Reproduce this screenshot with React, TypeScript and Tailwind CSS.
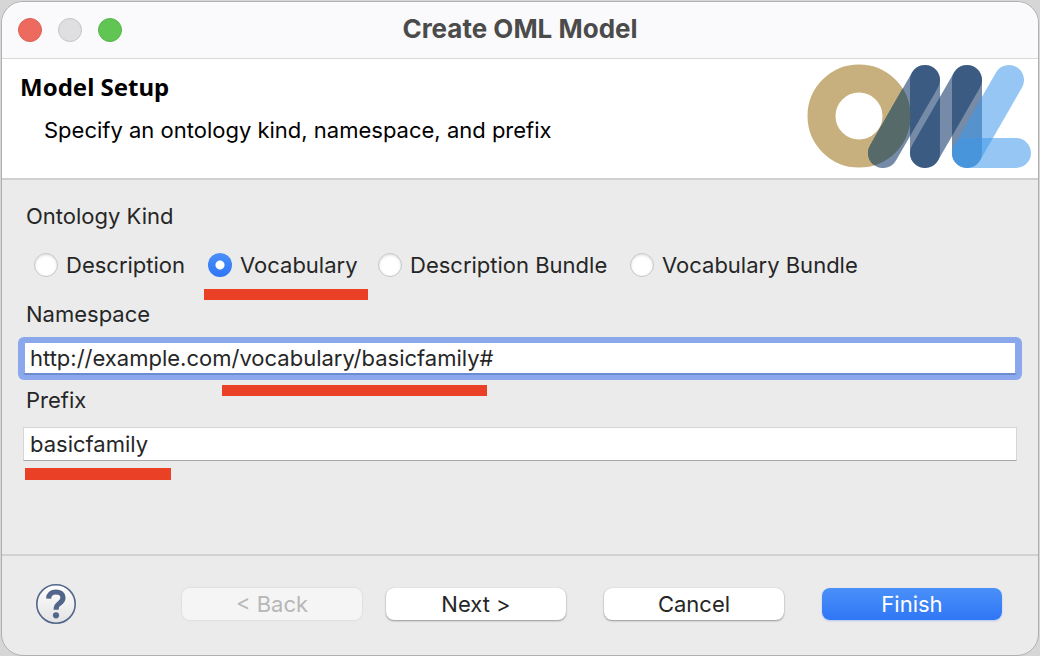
import { useState } from "react";

const kinds = ["Description", "Vocabulary", "Description Bundle", "Vocabulary Bundle"];

function OmlLogo() {
  return (
    <svg width="224" height="104" viewBox="0 0 224 104" fill="none" strokeLinecap="round" role="img" aria-label="OML">
      <defs>
        <clipPath id="ring">
          <path
            clipRule="evenodd"
            d="M0.5 52a51.5 51.5 0 1 0 103 0a51.5 51.5 0 1 0 -103 0ZM28.5 52a23.5 23.5 0 1 0 47 0a23.5 23.5 0 1 0 -47 0Z"
          />
        </clipPath>
      </defs>
      <circle cx="52" cy="52" r="37.5" stroke="#c8b07e" strokeWidth="28" />
      <g stroke="#143a6a" strokeOpacity="0.59" strokeWidth="30">
        <path d="M118 16L76 89" />
        <path d="M118 16V89" />
        <path d="M160 16L118 89" />
        <path d="M160 16V89" />
      </g>
      <path d="M112 26L76 89" stroke="#566b69" strokeWidth="30" clipPath="url(#ring)" />
      <g stroke="#3d97ea" strokeOpacity="0.54" strokeWidth="30">
        <path d="M202 16L160 89" />
        <path d="M160 89H209" />
      </g>
    </svg>
  );
}

function HelpIcon() {
  return (
    <svg width="40" height="40" viewBox="0 0 40 40" fill="none">
      <defs>
        <linearGradient id="help-fill" x1="0" y1="0" x2="0" y2="1">
          <stop offset="0" stopColor="#ffffff" />
          <stop offset="1" stopColor="#e2e2e2" />
        </linearGradient>
      </defs>
      <circle cx="20" cy="20" r="19.2" fill="url(#help-fill)" stroke="#52658a" strokeWidth="1.6" />
      <path
        d="M12.6 14.6C12.8 10.4 15.6 8 19.9 8C24.3 8 27 10.3 27 13.6C27 16.4 25.5 17.9 23.3 19.5C21 21.1 20.1 22 20.1 25.8"
        stroke="#52658a"
        strokeWidth="5.2"
      />
      <circle cx="20" cy="31.3" r="3.1" fill="#52658a" />
    </svg>
  );
}

function Underline({ className }: { className: string }) {
  return <span aria-hidden="true" className={`pointer-events-none absolute bg-[#ea4025] ${className}`} />;
}

const button = "h-8 w-45 rounded-lg text-[22px] leading-8";
const plain = "bg-white text-[#262626] shadow-[0_0_1px_rgba(0,0,0,0.2),0_1px_2px_rgba(0,0,0,0.35)]";

export default function App() {
  const [kind, setKind] = useState("Vocabulary");
  const [namespace, setNamespace] = useState("http://example.com/vocabulary/basicfamily#");
  const [prefix, setPrefix] = useState("basicfamily");

  return (
    <div className="flex min-h-screen flex-col bg-[#d6d6d6] px-px pt-px font-['Inter',sans-serif] text-[22px] leading-7 text-[#262626]">
      <main className="flex grow flex-col overflow-hidden rounded-[22px] border border-[#b0b0b0] bg-[#ebebeb]">
        <div className="grid h-14 grid-cols-[1fr_auto_1fr] items-center bg-[#fafafc] px-4">
          <div className="flex gap-4">
            <button aria-label="Close" className="size-6 rounded-full border border-[#dd6056] bg-[#ec6a5e]" />
            <button aria-label="Minimize" disabled className="size-6 rounded-full border border-[#c4c4c6] bg-[#dfdfe1]" />
            <button aria-label="Zoom" className="size-6 rounded-full border border-[#55b649] bg-[#61c554]" />
          </div>
          <h1 className="pb-0.5 text-[26px] font-bold text-[#4b4b4b]">Create OML Model</h1>
        </div>

        <header className="flex justify-between border-t border-b-2 border-t-[#d9d9dc] border-b-[#d0d0d0] bg-white pr-[7px] pl-[18px] text-black">
          <div className="pt-[14px]">
            <h2 className="font-['Noto_Sans',sans-serif] text-2xl leading-7 font-bold">Model Setup</h2>
            <p className="mt-[15px] pl-6">Specify an ontology kind, namespace, and prefix</p>
          </div>
          <div className="h-[119px] pt-[5px]">
            <OmlLogo />
          </div>
        </header>

        <form className="flex grow flex-col px-[21px] pt-[22px]" onSubmit={(e) => e.preventDefault()}>
          <fieldset>
            <legend className="pl-[3px]">Ontology Kind</legend>
            <div className="mt-[21px] grid grid-cols-[174px_170px_252px_auto] pl-[11px]">
              {kinds.map((name) => (
                <label key={name} className="relative flex items-center gap-2 whitespace-nowrap">
                  <input
                    type="radio"
                    name="kind"
                    checked={kind === name}
                    onChange={() => setKind(name)}
                    className="size-6 shrink-0 appearance-none rounded-full border border-[#c6c6c6] bg-white shadow-[inset_0_1px_3px_rgba(0,0,0,0.15)] checked:border-0 checked:bg-[radial-gradient(circle,white_4px,transparent_5px),linear-gradient(#4a8ff8,#3076f6)] checked:shadow-none"
                  />
                  {name}
                  {name === "Vocabulary" && <Underline className="top-[38px] -left-1 h-[11px] w-41" />}
                </label>
              ))}
            </div>
          </fieldset>

          <label htmlFor="namespace" className="mt-[21px] pl-[3px]">
            Namespace
          </label>
          <div className="relative mt-[14px]">
            <input
              id="namespace"
              value={namespace}
              onChange={(e) => setNamespace(e.target.value)}
              className="block h-[33px] w-full rounded-[2px] border-2 border-t border-[#8ba8ec] border-b-[#6d8bd0] bg-white px-[5px] shadow-[0_0_0_5px_#8ba8ec] outline-none"
            />
            <Underline className="top-[43px] left-[199px] h-[11px] w-[265px]" />
          </div>

          <label htmlFor="prefix" className="mt-[11px] pl-[3px]">
            Prefix
          </label>
          <div className="relative mt-[13px]">
            <input
              id="prefix"
              value={prefix}
              onChange={(e) => setPrefix(e.target.value)}
              className="block h-[34px] w-full border border-[#d6d6d6] border-b-[#a8a8a8] bg-white px-1.5 outline-none"
            />
            <Underline className="top-[41px] left-0.5 h-3 w-[146px]" />
          </div>
        </form>

        <footer className="flex h-[101px] items-center justify-between border-t-2 border-[#d2d2d2] pr-9 pb-1 pl-[34px]">
          <button aria-label="Help" className="rounded-full">
            <HelpIcon />
          </button>
          <div className="flex gap-[38px]">
            <div className="flex gap-6">
              <button disabled className={`${button} bg-[#f5f5f5] text-[#b7b7b7] shadow-[0_0_1px_1px_rgba(0,0,0,0.05)]`}>
                &lt; Back
              </button>
              <button className={`${button} ${plain}`}>Next &gt;</button>
            </div>
            <button className={`${button} ${plain}`}>Cancel</button>
            <button className={`${button} bg-linear-to-b from-[#4a90f9] to-[#3076f6] text-white shadow-[0_1px_2px_rgba(48,118,246,0.3)]`}>
              Finish
            </button>
          </div>
        </footer>
      </main>
    </div>
  );
}
